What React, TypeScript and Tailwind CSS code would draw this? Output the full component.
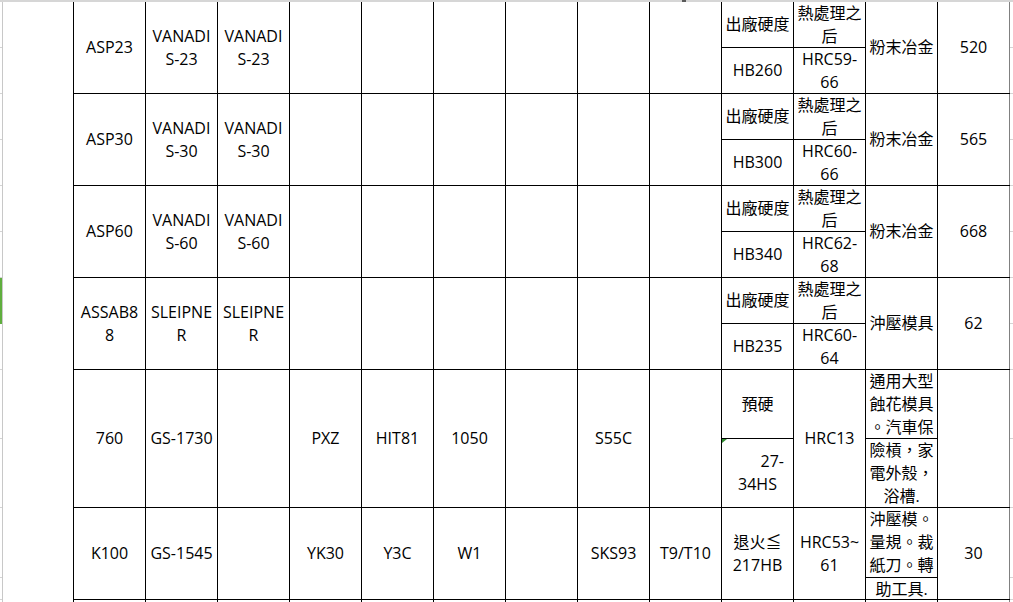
import React from 'react';

type Split = {
  top: React.ReactNode;
  bottom: React.ReactNode;
  topH: string;
  mark?: boolean;
};
type Cell = string | Split;
type Row = { h: string; cells: Cell[] };

const empty6 = ['', '', '', '', '', ''];

const rows: Row[] = [
  {
    h: 'h-[92px]',
    cells: ['ASP23', 'VANADI\nS-23', 'VANADI\nS-23', ...empty6,
      { top: '出廠硬度', bottom: 'HB260', topH: 'h-[46px]' },
      { top: '熱處理之\n后', bottom: 'HRC59-\n66', topH: 'h-[46px]' },
      '粉末冶金', '520'],
  },
  {
    h: 'h-[92px]',
    cells: ['ASP30', 'VANADI\nS-30', 'VANADI\nS-30', ...empty6,
      { top: '出廠硬度', bottom: 'HB300', topH: 'h-[46px]' },
      { top: '熱處理之\n后', bottom: 'HRC60-\n66', topH: 'h-[46px]' },
      '粉末冶金', '565'],
  },
  {
    h: 'h-[92px]',
    cells: ['ASP60', 'VANADI\nS-60', 'VANADI\nS-60', ...empty6,
      { top: '出廠硬度', bottom: 'HB340', topH: 'h-[46px]' },
      { top: '熱處理之\n后', bottom: 'HRC62-\n68', topH: 'h-[46px]' },
      '粉末冶金', '668'],
  },
  {
    h: 'h-[92px]',
    cells: ['ASSAB8\n8', 'SLEIPNE\nR', 'SLEIPNE\nR', ...empty6,
      { top: '出廠硬度', bottom: 'HB235', topH: 'h-[46px]' },
      { top: '熱處理之\n后', bottom: 'HRC60-\n64', topH: 'h-[46px]' },
      '沖壓模具', '62'],
  },
  {
    h: 'h-[138px]',
    cells: ['760', 'GS-1730', '', 'PXZ', 'HIT81', '1050', '', 'S55C', '',
      {
        top: '預硬',
        bottom: (
          <span className="block w-full">
            <span className="block text-right pr-[9px]">27-</span>
            <span className="block">34HS</span>
          </span>
        ),
        topH: 'h-[69px]',
        mark: true,
      },
      'HRC13',
      { top: '通用大型\n蝕花模具\n。汽車保', bottom: '險槓，家\n電外殼，\n浴槽.', topH: 'h-[69px]' },
      ''],
  },
  {
    h: 'h-[92px]',
    cells: ['K100', 'GS-1545', '', 'YK30', 'Y3C', 'W1', '', 'SKS93', 'T9/T10',
      '退火≦\n217HB', 'HRC53~\n61',
      { top: '沖壓模。\n量規。裁\n紙刀。轉', bottom: '助工具.', topH: 'h-[70px]' },
      '30'],
  },
];

// spreadsheet gridline heights for the row header strip
const gridRows = [46, 46, 46, 46, 46, 46, 46, 46, 69, 69, 70, 22];

const Gutter = ({ side }: { side: 'left' | 'right' }) => (
  <div className={side === 'left' ? 'w-[3px] border-r border-[#c8c8c8] flex flex-col' : 'w-[3px] flex flex-col'}>
    {gridRows.map((h, i) => (
      <div
        key={i}
        style={{ height: h }}
        className={side === 'left' && i === 6 ? 'bg-[#5fae3e]' : 'border-b border-[#d4d4d4]'}
      />
    ))}
  </div>
);

const Text = ({ children }: { children: React.ReactNode }) => (
  <div className="flex-1 flex items-center justify-center text-center whitespace-pre-line overflow-visible">
    {children}
  </div>
);

const CellBox = ({ cell, last }: { cell: Cell; last: boolean }) => {
  const edge = last ? 'border-[#808080]' : 'border-black';
  if (typeof cell === 'string') {
    return (
      <div className={`w-[72px] shrink-0 border-r ${edge} flex`}>
        <Text>{cell}</Text>
      </div>
    );
  }
  return (
    <div className={`w-[72px] shrink-0 border-r ${edge} flex flex-col`}>
      <div className={`${cell.topH} shrink-0 border-b border-black flex`}>
        <Text>{cell.top}</Text>
      </div>
      <div className="relative flex-1 flex">
        {cell.mark && (
          <svg className="absolute left-0 top-0" width="5" height="4" viewBox="0 0 5 4">
            <polygon points="0,0 5,0 0,4" fill="#2f8a2f" />
          </svg>
        )}
        <Text>{cell.bottom}</Text>
      </div>
    </div>
  );
};

export default function App() {
  return (
    <div className="w-[1013px] h-[602px] overflow-hidden bg-white text-black text-[16px] leading-[23px] font-['Open_Sans','Noto_Sans_CJK_TC',sans-serif]">
      <div className="h-[2px] bg-[#d6d6d6] flex">
        <div className="ml-[682px] w-[4px] h-[2px] bg-[#5a5a5a]" />
      </div>
      <div className="flex">
        <Gutter side="left" />
        <div className="w-[70px] shrink-0" />
        <div className="border-l border-black shrink-0">
          {rows.map((row, r) => (
            <div key={r} className={`${row.h} flex border-b border-black`}>
              {row.cells.map((c, i) => (
                <CellBox key={i} cell={c} last={i === row.cells.length - 1} />
              ))}
            </div>
          ))}
          <div className="h-[4px] flex">
            {Array.from({ length: 13 }).map((_, i) => (
              <CellBox key={i} cell="" last={i === 12} />
            ))}
          </div>
        </div>
        <Gutter side="right" />
      </div>
    </div>
  );
}
